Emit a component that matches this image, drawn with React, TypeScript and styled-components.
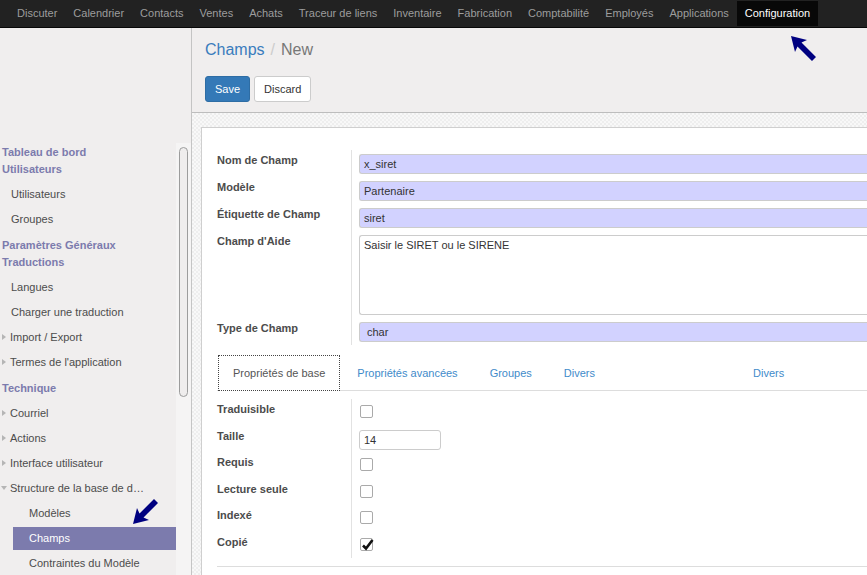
import React from 'react';
import styled, {createGlobalStyle} from 'styled-components';

const GlobalStyle = createGlobalStyle`
html,body{margin:0;padding:0;height:100%;overflow:hidden;}
body{font-family:"Liberation Sans",Arial,Helvetica,sans-serif;font-size:11px;color:#4c4c4c;background:#f0eeee;}
#root{height:100%;}
*{box-sizing:border-box;}
`;

const Page = styled.div`
position:relative;height:575px;display:flex;flex-direction:column;overflow:hidden;
`;

const TopBar = styled.nav`
display:flex;align-items:flex-start;height:28px;padding:1px 0 0 9px;
background:#222;border-bottom:1px solid #080808;
`;
const TopItem = styled.a<{ $active?: boolean }>`
height:25px;line-height:25px;padding:0 8px;font-size:11px;text-decoration:none;white-space:nowrap;
color:${p => p.$active ? '#fff' : '#9d9d9d'};
background:${p => p.$active ? '#080808' : 'transparent'};
`;

const Body = styled.div`
flex:1;display:flex;min-height:0;
`;

const Sidebar = styled.aside`
width:192px;flex:none;display:flex;background:#f0eeee;border-right:1px solid #c4c4c4;
`;
const Menu = styled.div`
width:176px;padding-top:116px;
`;
const MenuSection = styled.div`
& + &{margin-top:6px;}
`;
const MenuHeader = styled.div`
line-height:17px;padding-left:2px;font-weight:bold;color:#7c7bad;white-space:nowrap;
`;
const MenuList = styled.div`
margin-top:3px;
`;
const SubList = styled.div`
padding-top:1px;
`;
const MenuItem = styled.div<{ $caret?: 'right' | 'down' }>`
display:flex;align-items:center;height:25px;color:#4c4c4c;white-space:nowrap;
padding-left:${p => p.$caret === 'right' ? 2 : p.$caret === 'down' ? 1 : 11}px;
&::before{
  content:'';display:${p => p.$caret ? 'block' : 'none'};width:0;height:0;
  margin-right:${p => p.$caret === 'down' ? 3 : 4}px;
  ${p => p.$caret === 'down'
    ? 'border-left:3px solid transparent;border-right:3px solid transparent;border-top:4px solid #b5b5b5;'
    : 'border-top:3px solid transparent;border-bottom:3px solid transparent;border-left:4px solid #b5b5b5;'}
}
`;
const SubItem = styled.div<{ $active?: boolean }>`
margin:${p => p.$active ? '1px 0 1px 13px' : '0 0 0 13px'};
height:${p => p.$active ? 23 : 25}px;line-height:${p => p.$active ? 23 : 25}px;padding-left:16px;
white-space:nowrap;
color:${p => p.$active ? '#fff' : '#4c4c4c'};
background:${p => p.$active ? '#7c7bad' : 'transparent'};
`;
const ScrollTrack = styled.div`
width:15px;margin-top:115px;padding:4px 3px 0;background:#f5f4f4;
`;
const ScrollThumb = styled.div`
height:250px;border:1px solid #9c9c9c;border-radius:5px;background:#efeded;
`;

const Main = styled.main`
flex:1;min-width:0;display:flex;flex-direction:column;overflow:hidden;
`;
const ViewHeader = styled.div`
padding:11px 13px 10px;background:#f0eeee;border-bottom:1px solid #bdbdbd;
`;
const Breadcrumb = styled.div`
font-size:16px;line-height:22px;color:#777;
`;
const Crumb = styled.a`
color:#3a7cbd;text-decoration:none;
`;
const Slash = styled.span`
padding:0 6px;color:#ccc;
`;
const ButtonRow = styled.div`
display:flex;gap:4px;margin-top:15px;
`;
const Button = styled.button<{ $primary?: boolean }>`
height:26px;padding:0 9px;border-radius:3px;font:inherit;font-size:11px;
color:${p => p.$primary ? '#fff' : '#333'};
background:${p => p.$primary ? '#3479b7' : '#fff'};
border:1px solid ${p => p.$primary ? '#2e6da4' : '#ccc'};
`;

const Content = styled.div`
flex:1;padding:14px 0 0 9px;overflow:hidden;
background-color:#f4f4f4;
background-image:repeating-conic-gradient(#eeeeee 0% 25%, #f8f8f8 0% 50%);
background-size:4px 4px;
`;
const Sheet = styled.div`
width:760px;min-height:600px;padding:22px 0 0 15px;background:#fff;border:1px solid #cfcfcf;
`;
const FieldGrid = styled.div`
display:grid;grid-template-columns:134px 1fr;
`;
const Label = styled.div`
padding-top:4px;line-height:13px;font-weight:bold;color:#4c4c4c;white-space:nowrap;
`;
const Value = styled.div<{ $fixed?: boolean }>`
border-left:1px solid #e2e2e2;padding:4px 0 3px 7px;
${p => p.$fixed ? 'height:26.5px;padding-bottom:0;' : ''}
`;
const Field = styled.div<{ $pad?: number; $tall?: boolean }>`
height:${p => p.$tall ? 80 : 20}px;padding:${p => p.$tall ? '3px' : '0'} ${p => p.$pad ?? 4}px 0;
line-height:${p => p.$tall ? 13 : 18}px;color:#333;
background:${p => p.$tall ? '#fff' : '#d2d2ff'};
border:1px solid #ccc;border-radius:3px 0 0 3px;border-right:none;
`;
const SmallInput = styled.div`
width:82px;height:20px;padding:0 4px;line-height:18px;color:#333;background:#fff;
border:1px solid #ccc;border-radius:3px;
`;
const Check = styled.span`
display:block;width:13px;height:13px;margin:2px 0 0 1px;border:1px solid #aaa;border-radius:2px;background:#fff;
position:relative;
> svg{position:absolute;left:0;top:-2px;}
`;

const TabBar = styled.div`
display:flex;margin-top:10px;border-bottom:1px solid #ddd;
`;
const Tab = styled.a<{ $active?: boolean; $gap?: number }>`
height:36px;line-height:34px;padding:0 14px;margin:0 2px -1px ${p => p.$active ? 1 : (p.$gap ?? 0)}px;
white-space:nowrap;text-decoration:none;
color:${p => p.$active ? '#555' : '#428bca'};
background:${p => p.$active ? '#fff' : 'transparent'};
border:1px ${p => p.$active ? 'dotted #444' : 'solid transparent'};
`;
const PropsGrid = styled(FieldGrid)`
margin-top:8px;
`;
const Rule = styled.div`
margin-top:8px;border-top:1px solid #ddd;
`;

const Pointer = styled.svg<{ $x: number; $y: number; $turn?: number }>`
position:absolute;left:${p => p.$x}px;top:${p => p.$y}px;
transform:rotate(${p => p.$turn ?? 0}deg);
`;

function Arrow({x, y, turn}: { x: number; y: number; turn?: number }) {
  return (
    <Pointer $x={x} $y={y} $turn={turn} width="27" height="27" viewBox="0 0 27 27">
      <polygon points="1,1 17,5 11.5,7.5 26,22 22,26 7.5,11.5 5,17" fill="#000080"/>
    </Pointer>
  );
}

function CheckBox({checked}: { checked?: boolean }) {
  return (
    <Check>
      {checked &&
        <svg width="13" height="15" viewBox="0 0 13 15">
          <path d="M2 8.5 L5 11.5 L11.5 3" stroke="#111" strokeWidth="2.6" fill="none"/>
        </svg>}
    </Check>
  );
}

const apps = ['Discuter', 'Calendrier', 'Contacts', 'Ventes', 'Achats', 'Traceur de liens', 'Inventaire',
  'Fabrication', 'Comptabilité', 'Employés', 'Applications'];

const mainFields: [string, string][] = [
  ['Nom de Champ', 'x_siret'],
  ['Modèle', 'Partenaire'],
  ['Étiquette de Champ', 'siret'],
];

const flags: [string, boolean][] = [
  ['Requis', false],
  ['Lecture seule', false],
  ['Indexé', false],
  ['Copié', true],
];

export default function App() {
  return (
    <Page>
      <GlobalStyle/>
      <TopBar>
        {apps.map(a => <TopItem key={a}>{a}</TopItem>)}
        <TopItem $active>Configuration</TopItem>
      </TopBar>
      <Body>
        <Sidebar>
          <Menu>
            <MenuSection>
              <MenuHeader>Tableau de bord</MenuHeader>
              <MenuHeader>Utilisateurs</MenuHeader>
              <MenuList>
                <MenuItem>Utilisateurs</MenuItem>
                <MenuItem>Groupes</MenuItem>
              </MenuList>
            </MenuSection>
            <MenuSection>
              <MenuHeader>Paramètres Généraux</MenuHeader>
              <MenuHeader>Traductions</MenuHeader>
              <MenuList>
                <MenuItem>Langues</MenuItem>
                <MenuItem>Charger une traduction</MenuItem>
                <MenuItem $caret="right">Import / Export</MenuItem>
                <MenuItem $caret="right">Termes de l'application</MenuItem>
              </MenuList>
            </MenuSection>
            <MenuSection>
              <MenuHeader>Technique</MenuHeader>
              <MenuList>
                <MenuItem $caret="right">Courriel</MenuItem>
                <MenuItem $caret="right">Actions</MenuItem>
                <MenuItem $caret="right">Interface utilisateur</MenuItem>
                <MenuItem $caret="down">Structure de la base de d…</MenuItem>
                <SubList>
                  <SubItem>Modèles</SubItem>
                  <SubItem $active>Champs</SubItem>
                  <SubItem>Contraintes du Modèle</SubItem>
                </SubList>
              </MenuList>
            </MenuSection>
          </Menu>
          <ScrollTrack>
            <ScrollThumb/>
          </ScrollTrack>
        </Sidebar>
        <Main>
          <ViewHeader>
            <Breadcrumb>
              <Crumb>Champs</Crumb><Slash>/</Slash>New
            </Breadcrumb>
            <ButtonRow>
              <Button $primary>Save</Button>
              <Button>Discard</Button>
            </ButtonRow>
          </ViewHeader>
          <Content>
            <Sheet>
              <FieldGrid>
                {mainFields.map(([label, value]) =>
                  <React.Fragment key={label}>
                    <Label>{label}</Label>
                    <Value><Field>{value}</Field></Value>
                  </React.Fragment>
                )}
                <Label>Champ d'Aide</Label>
                <Value><Field $tall>Saisir le SIRET ou le SIRENE</Field></Value>
                <Label>Type de Champ</Label>
                <Value><Field $pad={7}>char</Field></Value>
              </FieldGrid>
              <TabBar>
                <Tab $active>Propriétés de base</Tab>
                <Tab>Propriétés avancées</Tab>
                <Tab>Groupes</Tab>
                <Tab>Divers</Tab>
                <Tab $gap={126}>Divers</Tab>
              </TabBar>
              <PropsGrid>
                <Label>Traduisible</Label>
                <Value $fixed><CheckBox/></Value>
                <Label>Taille</Label>
                <Value $fixed><SmallInput>14</SmallInput></Value>
                {flags.map(([label, on]) =>
                  <React.Fragment key={label}>
                    <Label>{label}</Label>
                    <Value $fixed><CheckBox checked={on}/></Value>
                  </React.Fragment>
                )}
              </PropsGrid>
              <Rule/>
            </Sheet>
          </Content>
        </Main>
      </Body>
      <Arrow x={790} y={35}/>
      <Arrow x={132} y={498} turn={-90}/>
    </Page>
  );
}
